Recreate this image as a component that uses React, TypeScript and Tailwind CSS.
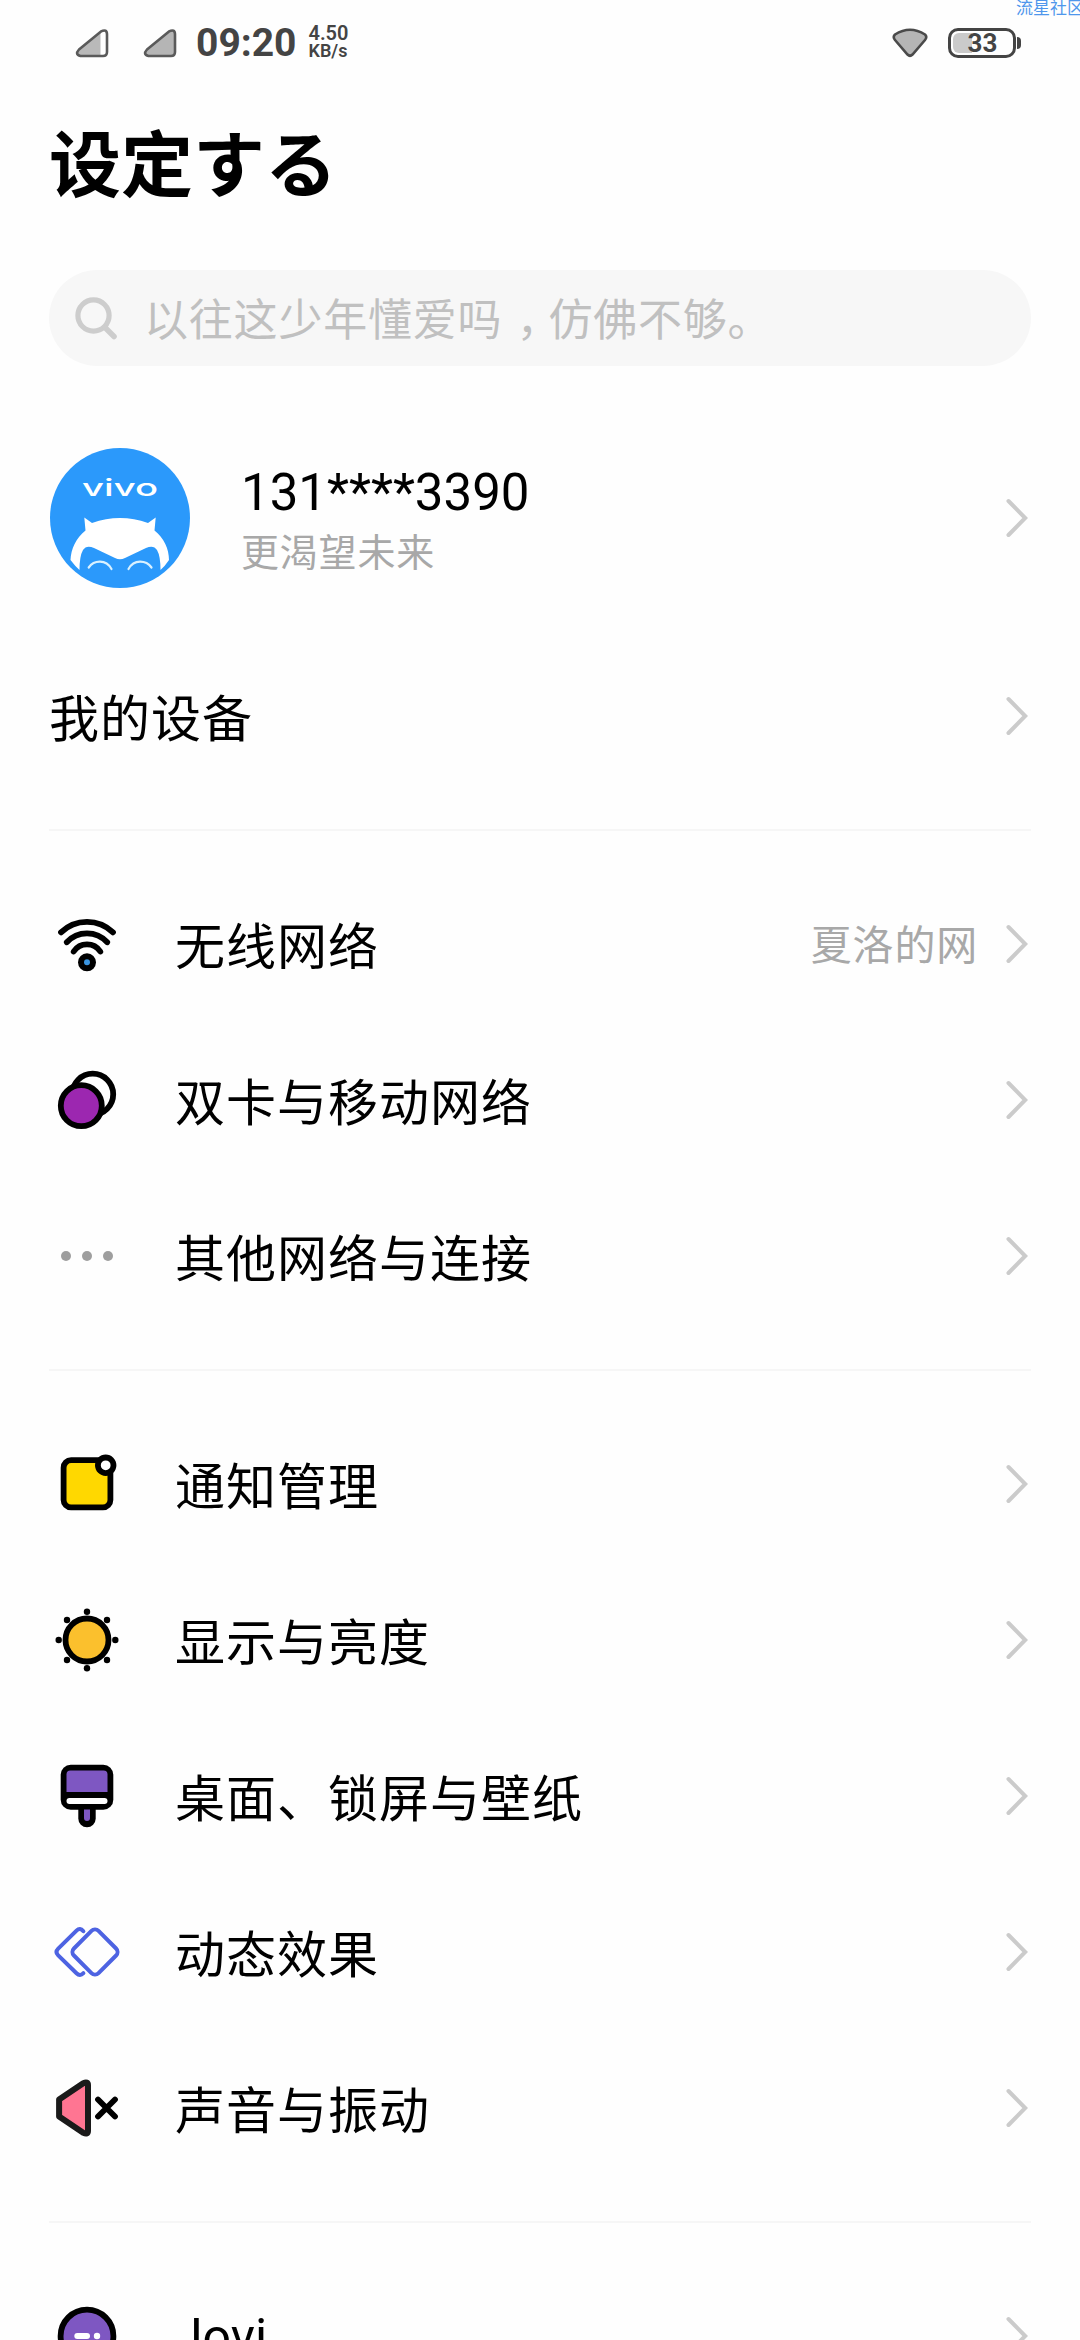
import React from 'react';
import { clsx } from 'clsx';

// ====== Types ======
interface SettingItem {
  id: string;
  label: string;
  icon: React.ReactNode;
  value?: string;
  latin?: boolean;
}

// ====== Setting icons (72x72 box) ======
function Icon({ children }: { children: React.ReactNode }) {
  return (
    <svg viewBox="0 0 72 72" className="h-[72px] w-[72px] shrink-0" fill="none" strokeLinecap="round" strokeLinejoin="round">
      {children}
    </svg>
  );
}

function WifiIcon() {
  return (
    <Icon>
      <g stroke="#000" strokeWidth="5.8">
        <path d="M10 24.3A37.4 37.4 0 0 1 62 24.3" />
        <path d="M15.8 34.3A27.4 27.4 0 0 1 56.2 34.3" />
        <path d="M22.7 43.5A16 16 0 0 1 49.3 43.5" />
      </g>
      <circle cx="36" cy="54.3" r="9" fill="#000" />
      <circle cx="36" cy="54.3" r="3" fill="#3a94e0" />
    </Icon>
  );
}

function SimIcon() {
  return (
    <Icon>
      <circle cx="41.7" cy="30.2" r="20.5" stroke="#000" strokeWidth="5.8" />
      <circle cx="30.3" cy="41.7" r="20.5" fill="#9c27b0" stroke="#000" strokeWidth="5.8" />
    </Icon>
  );
}

function MoreIcon() {
  return (
    <Icon>
      {[15, 36, 57].map(x => <circle key={x} cx={x} cy="36" r="5" fill="#9e9e9e" />)}
    </Icon>
  );
}

function NoticeIcon() {
  return (
    <Icon>
      <rect x="12.6" y="12.2" width="46.8" height="47.2" rx="7.5" fill="#ffd800" stroke="#000" strokeWidth="5.8" />
      <circle cx="54.7" cy="17.3" r="7.8" fill="#fff" stroke="#000" strokeWidth="5.8" />
    </Icon>
  );
}

function SunIcon() {
  const dots = [[0, -28.3], [20, -20], [28.3, 0], [20, 20], [0, 28.3], [-20, 20], [-28.3, 0], [-20, -20]];
  return (
    <Icon>
      {dots.map(([x, y]) => <circle key={`${x},${y}`} cx={36 + x} cy={36 + y} r="3.2" fill="#000" />)}
      <circle cx="36" cy="36" r="21.5" fill="#fbc02d" stroke="#000" strokeWidth="5.8" />
    </Icon>
  );
}

function BrushIcon() {
  return (
    <Icon>
      <rect x="27.3" y="40" width="17.4" height="27.2" rx="8.7" fill="#000" />
      <rect x="9.7" y="4.7" width="52.6" height="45" rx="10" fill="#000" />
      <path d="M15.5 32V14.6a4 4 0 0 1 4-4h33a4 4 0 0 1 4 4V32z" fill="#7e57c2" />
      <rect x="15.5" y="38" width="41" height="6" rx="3" fill="#fff" />
      <path d="M33 49.5h6v8.6a3 3 0 0 1-6 0z" fill="#7e57c2" />
    </Icon>
  );
}

function MotionIcon() {
  return (
    <Icon>
      <g stroke="#4d63e2" strokeWidth="4">
        <rect x="26.6" y="18.6" width="34.8" height="34.8" rx="5" transform="rotate(45 44 36)" />
        <path d="M32.4 15.2Q29 11.2 25.5 14.7L7.2 32.6Q3.8 36 7.2 39.4L25.5 57.3Q29 60.8 32.4 57.2" />
      </g>
    </Icon>
  );
}

function SoundIcon() {
  return (
    <Icon>
      <path d="M8.1 27.6L32.2 11.2Q37 9.2 37 13V59Q37 62.8 32.2 60.8L8.1 44.4z" fill="#ff7592" stroke="#1a1a1a" strokeWidth="6" />
      <path d="M47 27.5L64 44.5M64 27.5L47 44.5" stroke="#000" strokeWidth="5.8" />
    </Icon>
  );
}

function JoviIcon() {
  return (
    <Icon>
      <circle cx="36" cy="36" r="26.4" fill="#7e57c2" stroke="#000" strokeWidth="5.8" />
      <path d="M26.3 36h9.7" stroke="#fff" strokeWidth="6" />
      <circle cx="46" cy="36" r="3.2" fill="#fff" />
    </Icon>
  );
}

// ====== Data ======
const sections: SettingItem[][] = [
  [
    { id: 'wifi', label: '无线网络', icon: <WifiIcon />, value: '夏洛的网' },
    { id: 'sim', label: '双卡与移动网络', icon: <SimIcon /> },
    { id: 'more', label: '其他网络与连接', icon: <MoreIcon /> },
  ],
  [
    { id: 'notice', label: '通知管理', icon: <NoticeIcon /> },
    { id: 'display', label: '显示与亮度', icon: <SunIcon /> },
    { id: 'wallpaper', label: '桌面、锁屏与壁纸', icon: <BrushIcon /> },
    { id: 'motion', label: '动态效果', icon: <MotionIcon /> },
    { id: 'sound', label: '声音与振动', icon: <SoundIcon /> },
  ],
  [{ id: 'jovi', label: 'Jovi', icon: <JoviIcon />, latin: true }],
];

// ====== Status bar ======
const signalPath = 'M4 21.5L26 3.4Q32 .5 32 6.5V24Q32 28 28 28H5.5Q-.5 26.5 4 21.5z';

function Signal({ full, className }: { full?: boolean; className?: string }) {
  return (
    <svg viewBox="0 0 34 30" className={clsx('h-[30px] w-[34px]', className)} strokeLinejoin="round">
      <path d={signalPath} fill={full ? '#b5b5b5' : '#fff'} />
      {!full && <path d="M4 21.5L25.5 4V28H5.5Q-.5 26.5 4 21.5z" fill="#b9b9b9" />}
      <path d={signalPath} fill="none" stroke="#5a5a5a" strokeWidth="2.6" />
    </svg>
  );
}

function StatusBar() {
  return (
    <div className="flex h-[85px] items-center pl-[75px] pr-[59px] text-[#444]">
      <Signal />
      <Signal full className="ml-[34px]" />
      <span className="ml-[19px] pt-px text-[39px] font-bold leading-none">09:20</span>
      <div className="ml-3 flex flex-col pb-[2px] font-semibold leading-[18px]">
        <span className="text-[20px]">4.50</span>
        <span className="text-[18px]">KB/s</span>
      </div>
      <svg viewBox="0 0 36 31" className="ml-auto h-[31px] w-9">
        <path d="M3 7.5Q18-2 33 7.5Q35.5 10 33 13L20.5 27.5Q18 30 15.5 27.5L3 13Q.5 10 3 7.5z" fill="#b5b5b5" stroke="#4a4a4a" strokeWidth="2.6" />
      </svg>
      <div className="ml-5 flex items-center">
        <div className="relative flex h-[30px] w-[68px] items-center justify-center rounded-[10px] border-[3px] border-[#444]">
          <div className="absolute left-[2px] top-[2px] h-5 w-[19px] rounded-l-[6px] bg-[#cacaca]" />
          <span className="relative pl-px pt-px text-[26px] font-bold leading-none">33</span>
        </div>
        <div className="ml-px h-3 w-1 rounded-r-full bg-[#444]" />
      </div>
    </div>
  );
}

// ====== Rows ======
function Chevron() {
  return (
    <svg viewBox="0 0 24 40" className="h-10 w-6 shrink-0" fill="none" stroke="#cbcbcb" strokeWidth="4" strokeLinecap="round" strokeLinejoin="miter">
      <path d="M3.5 3L20.2 20L3.5 37" />
    </svg>
  );
}

function Divider() {
  return <div className="my-[35px] h-[2px] bg-[#f6f6f6]" />;
}

function SettingRow({ item }: { item: SettingItem }) {
  return (
    <div className="flex h-[156px] items-center pl-[2px] pr-[2px]">
      {item.icon}
      <span className={clsx('ml-[52px] text-[50px] leading-none', item.latin ? 'pt-px' : 'pt-[7px] tracking-[1px]')}>
        {item.label}
      </span>
      <div className="ml-auto flex items-center">
        {item.value && <span className="mr-[27px] pt-[5px] text-[41px] leading-none tracking-[0.8px] text-[#a8a8a8]">{item.value}</span>}
        <Chevron />
      </div>
    </div>
  );
}

function Avatar() {
  return (
    <svg viewBox="0 0 140 140" className="h-[140px] w-[140px] shrink-0">
      <circle cx="70" cy="70" r="70" fill="#2b99fb" />
      <text x="32" y="48" fill="#fff" fontFamily="Inter, sans-serif" fontSize="24" fontWeight="500" textLength="76" lengthAdjust="spacingAndGlyphs">
        vivo
      </text>
      <path
        d="M34.3 69.5L42 75Q70 65 98 75L105.7 69.5L104.5 82.5C114 90 119 101 119 112Q115 118 110.5 122Q110.5 108 107 102Q103.5 96.5 96 100L75 110Q70 112.5 65 110L44 100Q36.5 96.5 33 102Q29.5 108 29.5 122Q25 118 20.5 112C21 101 26 90 35.5 82.5z"
        fill="#fff"
      />
      <path d="M38.7 119.5C44 112 56 111 61.5 121M78.5 121C84 111 96 112 101.5 119.5" fill="none" stroke="#d9f1ff" strokeWidth="2.2" strokeLinecap="round" />
    </svg>
  );
}

export default function App() {
  return (
    <div className="relative h-[2340px] w-[1080px] overflow-hidden bg-[#fefefe] font-[Roboto,'Noto_Sans_CJK_SC',sans-serif] text-black" lang="zh-CN">
      <span className="absolute left-[1016px] top-0 whitespace-nowrap text-[17px] leading-none text-[#4f97ec]">流星社区</span>
      <StatusBar />

      <div className="flex flex-col px-[49px]">
        <h1 className="mt-[46px] text-[72px] font-bold leading-[72px]">设定する</h1>

        <div className="mt-[67px] flex h-24 items-center rounded-full bg-[#f7f7f7] pl-[25px]">
          <svg viewBox="0 0 44 44" className="h-11 w-11" fill="none" stroke="#cdcdcd" strokeLinecap="round">
            <circle cx="19.5" cy="19.5" r="15.6" strokeWidth="5.2" />
            <path d="M31.5 32L40 40.5" strokeWidth="5.5" />
          </svg>
          <span className="ml-[26px] pt-[5px] text-[44px] leading-none tracking-[0.8px] text-[#c0c0c0]">
            以往这少年懂爱吗
            <span className="inline-block w-[46px] pl-[14px]">，</span>
            仿佛不够。
          </span>
        </div>

        <div className="mt-8 flex h-60 items-center pl-px pr-[2px]">
          <Avatar />
          <div className="ml-[51px] flex flex-col pt-[10px]">
            <span className="text-[51px] leading-[60px]">131****3390</span>
            <span className="text-[38px] leading-[60px] tracking-[0.8px] text-[#a8a8a8]">更渴望未来</span>
          </div>
          <div className="ml-auto flex">
            <Chevron />
          </div>
        </div>

        <div className="flex h-[156px] items-center justify-between pr-[2px]">
          <span className="pt-[7px] text-[50px] leading-none tracking-[1px]">我的设备</span>
          <Chevron />
        </div>

        {sections.map(items => (
          <React.Fragment key={items[0].id}>
            <Divider />
            {items.map(item => <SettingRow key={item.id} item={item} />)}
          </React.Fragment>
        ))}
      </div>
    </div>
  );
}
